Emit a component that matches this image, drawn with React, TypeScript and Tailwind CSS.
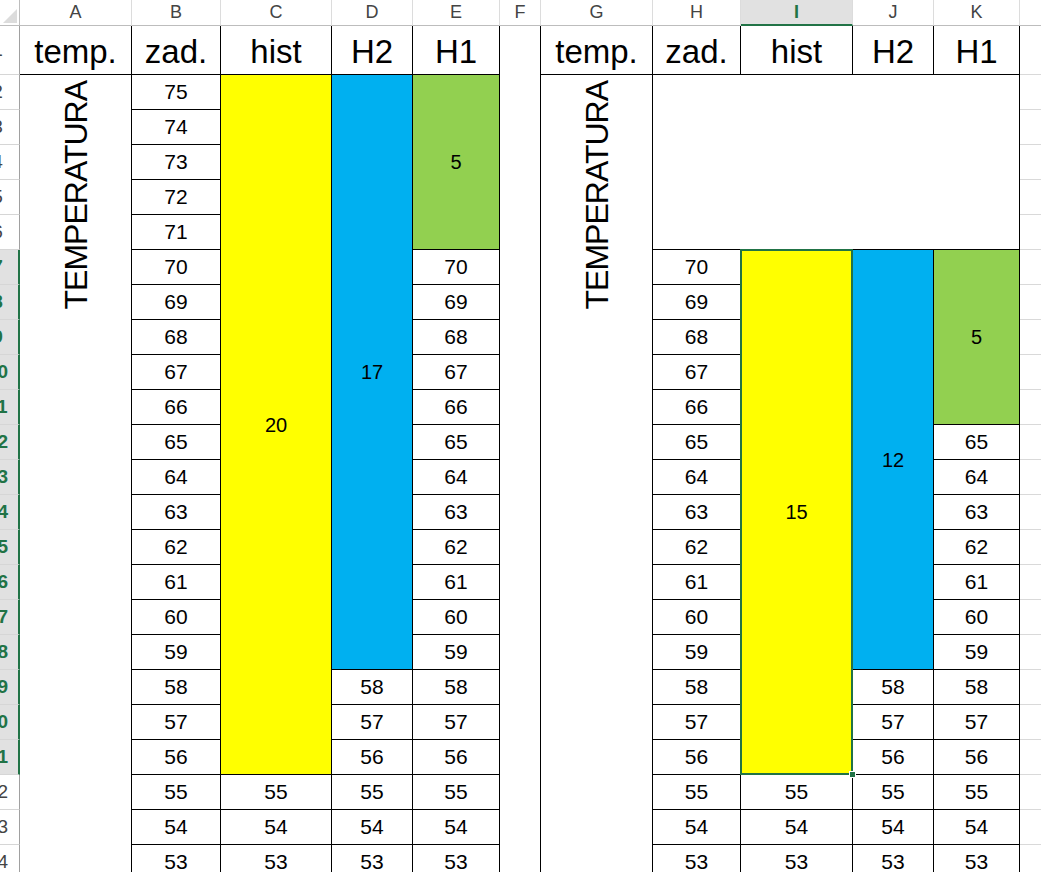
import React from "react";

const ROW = 35;

function range(from: number, to: number) {
  const out: number[] = [];
  for (let v = from; v >= to; v--) out.push(v);
  return out;
}

function Letter({ label, w, active }: { label: string; w: string; active?: boolean }) {
  return (
    <div
      className={`${w} h-[26px] shrink-0 flex items-center justify-center text-[18px] border-r border-r-[#dcdcdc] ${
        active
          ? "bg-[#e1e1e1] text-[#217346] font-bold border-b-2 border-b-[#217346]"
          : "bg-white text-[#444] border-b border-b-[#bdbdbd]"
      }`}
    >
      {label}
    </div>
  );
}

function Head({ label, w }: { label: string; w: string }) {
  return (
    <div className={`${w} h-[49px] shrink-0 border-b border-r border-black flex items-center justify-center pt-[3px] text-[33px]`}>
      {label}
    </div>
  );
}

function Num({ v }: { v: number }) {
  return (
    <div className="h-[35px] shrink-0 border-b border-r border-black flex items-center justify-center text-[21px]">
      {v}
    </div>
  );
}

function Fill({
  rows,
  color,
  label,
  selected,
}: {
  rows: number;
  color: string;
  label: string;
  selected?: boolean;
}) {
  return (
    <div
      className={`relative shrink-0 border-b border-r border-black flex items-center justify-center text-[20px] ${color}`}
      style={{ height: rows * ROW }}
    >
      {label}
      {selected && (
        <>
          <div className="absolute left-[-1px] top-[-1px] right-[-1px] bottom-[-1px] border-2 border-[#217346]" />
          <div className="absolute right-[-4px] bottom-[-4px] w-[7px] h-[7px] bg-[#217346] border border-white" />
        </>
      )}
    </div>
  );
}

function Column({ w, children }: { w: string; children: React.ReactNode }) {
  return <div className={`${w} shrink-0 flex flex-col`}>{children}</div>;
}

function TempColumn({ letter, w }: { letter: string; w: string }) {
  return (
    <Column w={w}>
      <Letter label={letter} w={w} />
      <Head label="temp." w={w} />
      <div className="flex-1 border-r border-black flex justify-center pt-[6px]">
        <span className="[writing-mode:vertical-rl] rotate-180 text-[32px] tracking-[-1px] leading-none h-fit">
          TEMPERATURA
        </span>
      </div>
    </Column>
  );
}

function RowHeaders() {
  const rows = Array.from({ length: 23 }, (_, i) => i + 2);
  return (
    <div className="w-[20px] shrink-0 flex flex-col">
      <div className="h-[26px] shrink-0 bg-white border-b border-r border-[#bdbdbd] relative">
        <svg className="absolute right-[2px] bottom-[2px]" width="14" height="14" viewBox="0 0 14 14">
          <polygon points="14,0 14,14 0,14" fill="#dcdcdc" />
        </svg>
      </div>
      <div className="h-[49px] shrink-0 relative overflow-hidden border-b border-b-[#d6d6d6] border-r border-r-[#a0a0a0]">
        <span className="absolute left-[-25px] w-[45px] top-0 bottom-0 flex items-center justify-center text-[19px] text-[#444]">
          1
        </span>
      </div>
      {rows.map((r) => {
        const sel = r >= 7 && r <= 21;
        return (
          <div
            key={r}
            className={`h-[35px] shrink-0 relative overflow-hidden border-b border-b-[#d6d6d6] ${
              sel ? "bg-[#e1e1e1] border-r-2 border-r-[#217346]" : "bg-white border-r border-r-[#a0a0a0]"
            }`}
          >
            <span
              className={`absolute left-[-25px] w-[45px] top-0 bottom-0 flex items-center justify-center text-[19px] ${
                sel ? "text-[#217346] font-bold" : "text-[#444]"
              }`}
            >
              {r}
            </span>
          </div>
        );
      })}
    </div>
  );
}

export default function App() {
  return (
    <div className="w-[1041px] h-[872px] overflow-hidden bg-white text-black font-['Liberation_Sans',Arial,sans-serif] flex">
      <RowHeaders />

      <TempColumn letter="A" w="w-[112px]" />

      <Column w="w-[89px]">
        <Letter label="B" w="w-[89px]" />
        <Head label="zad." w="w-[89px]" />
        {range(75, 53).map((v) => (
          <Num key={v} v={v} />
        ))}
      </Column>

      <Column w="w-[111px]">
        <Letter label="C" w="w-[111px]" />
        <Head label="hist" w="w-[111px]" />
        <Fill rows={20} color="bg-[#ffff00]" label="20" />
        {range(55, 53).map((v) => (
          <Num key={v} v={v} />
        ))}
      </Column>

      <Column w="w-[81px]">
        <Letter label="D" w="w-[81px]" />
        <Head label="H2" w="w-[81px]" />
        <Fill rows={17} color="bg-[#00b0f0]" label="17" />
        {range(58, 53).map((v) => (
          <Num key={v} v={v} />
        ))}
      </Column>

      <Column w="w-[87px]">
        <Letter label="E" w="w-[87px]" />
        <Head label="H1" w="w-[87px]" />
        <Fill rows={5} color="bg-[#92d050]" label="5" />
        {range(70, 53).map((v) => (
          <Num key={v} v={v} />
        ))}
      </Column>

      <Column w="w-[41px]">
        <Letter label="F" w="w-[41px]" />
        <div className="flex-1 border-r border-black" />
      </Column>

      <TempColumn letter="G" w="w-[112px]" />

      <div className="w-[367px] shrink-0 flex flex-col">
        <div className="flex">
          <Letter label="H" w="w-[88px]" />
          <Letter label="I" w="w-[112px]" active />
          <Letter label="J" w="w-[81px]" />
          <Letter label="K" w="w-[86px]" />
        </div>
        <div className="flex">
          <Head label="zad." w="w-[88px]" />
          <Head label="hist" w="w-[112px]" />
          <Head label="H2" w="w-[81px]" />
          <Head label="H1" w="w-[86px]" />
        </div>
        <div className="h-[175px] shrink-0 border-b border-r border-black" />
        <div className="flex">
          <Column w="w-[88px]">
            {range(70, 53).map((v) => (
              <Num key={v} v={v} />
            ))}
          </Column>
          <Column w="w-[112px]">
            <Fill rows={15} color="bg-[#ffff00]" label="15" selected />
            {range(55, 53).map((v) => (
              <Num key={v} v={v} />
            ))}
          </Column>
          <Column w="w-[81px]">
            <Fill rows={12} color="bg-[#00b0f0]" label="12" />
            {range(58, 53).map((v) => (
              <Num key={v} v={v} />
            ))}
          </Column>
          <Column w="w-[86px]">
            <Fill rows={5} color="bg-[#92d050]" label="5" />
            {range(65, 53).map((v) => (
              <Num key={v} v={v} />
            ))}
          </Column>
        </div>
      </div>

      <div className="flex-1 flex flex-col">
        <div className="h-[26px] shrink-0 bg-white border-b border-[#bdbdbd]" />
        <div className="h-[49px] shrink-0 border-b border-[#d9d9d9]" />
        {Array.from({ length: 23 }, (_, i) => (
          <div key={i} className="h-[35px] shrink-0 border-b border-[#d9d9d9]" />
        ))}
      </div>
    </div>
  );
}
